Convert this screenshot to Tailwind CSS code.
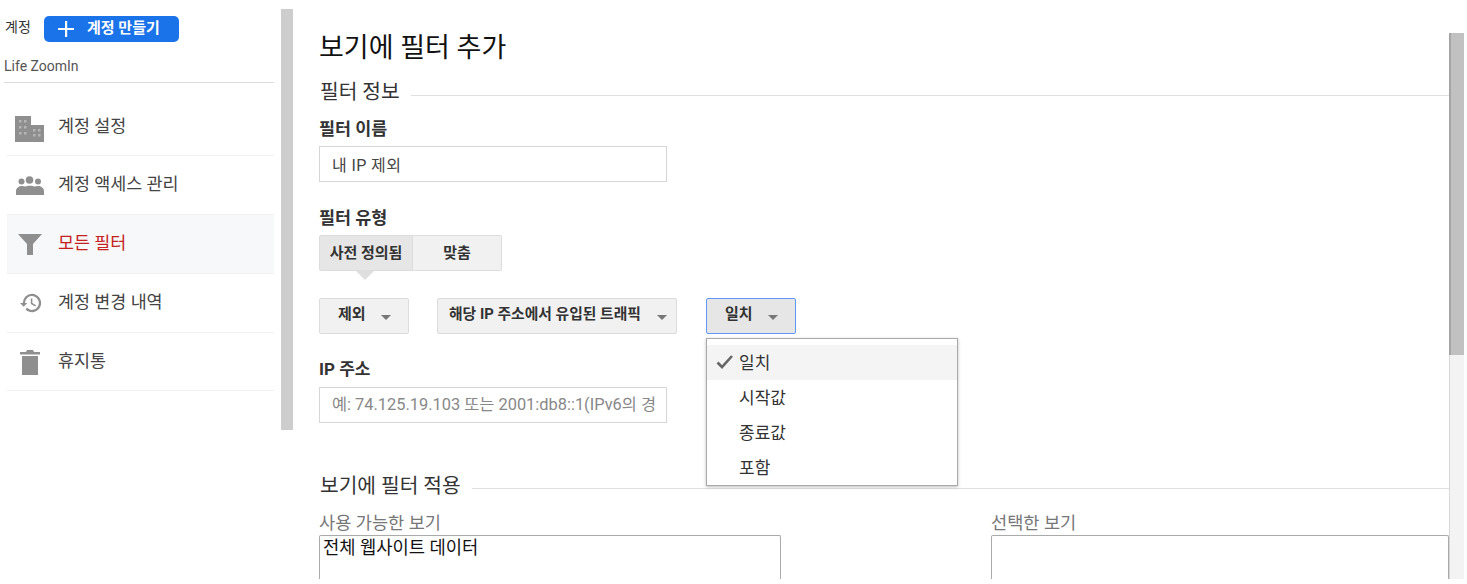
<!DOCTYPE html>
<html lang="ko">
<head>
<meta charset="utf-8">
<script src="https://cdn.jsdelivr.net/npm/@tailwindcss/browser@4"></script>
</head>
<body class="h-[584px] w-[1467px] overflow-hidden bg-white font-['Roboto','Noto_Sans_CJK_KR',sans-serif] text-[#333]">
<div class="flex h-[584px] w-full">
  <aside class="flex w-[293px] shrink-0 items-start">
    <div class="w-[281px] pl-[4px]">
      <div class="flex h-[56px] items-start pt-[16px]">
        <span class="mt-[2px] w-[40px] pl-px text-[14px] leading-[18px] text-[#333]">계정</span>
        <button class="flex h-[26px] w-[135px] items-center rounded-[5px] bg-[#1a73e8] pl-[13px] text-[15px] font-bold text-white">
          <svg class="h-[18px] w-[18px]" viewBox="0 0 18 18"><path d="M8 1h2.200v6.900H17v2.200h-6.800V17H8v-6.900H1V7.900h7z" fill="#fff"/></svg>
          <span class="ml-[12px] -mt-[2px] leading-[18px]">계정 만들기</span>
        </button>
      </div>
      <div class="mr-[7px] h-[27px] border-b border-[#ddd] text-[14px] leading-[20px] text-[#555]">Life ZoomIn</div>
      <nav class="ml-[3px] mr-[7px] mt-[14px] text-[17.400px] leading-[20px] text-[#444]">
        <div class="flex h-[59px] items-center border-b border-[#f1f1f1]">
          <svg class="ml-[8px] mt-[5px] h-[26px] w-[29px]" viewBox="0 0 29 26" fill="#8f8f8f"><path d="M0 0h16v9h13v17H0z"/><path fill="#b5b5b5" d="M4 4h2.500v2.500H4zm5 0h2.500v2.500H9zM4 10h2.500v2.500H4zm5 0h2.500v2.500H9zM4 16h2.500v2.500H4zm5 0h2.500v2.500H9zm9-3h2.500v2.500H18zm5 0h2.500v2.500H23zm-5 5h2.500v2.500H18zm5 0h2.500v2.500H23z"/></svg>
          <span class="ml-[14px] -mt-[1px]">계정 설정</span>
        </div>
        <div class="flex h-[59px] items-center border-b border-[#f1f1f1]">
          <svg class="ml-[9px] h-[19px] w-[28px]" viewBox="0 0 28 19" fill="#8f8f8f"><circle cx="13.500" cy="4" r="3.800"/><circle cx="5.500" cy="5.500" r="3"/><circle cx="22" cy="5.500" r="3"/><path d="M0 19v-4c0-3 3-5 6-5 1.500 0 2.500.2 3.500.6 1.200-.6 2.600-.8 4.500-.8s3.300.2 4.500.8c1-.4 2-.6 3.500-.6 3 0 6 2 6 5v4z"/></svg>
          <span class="ml-[14px] -mt-[2px]">계정 액세스 관리</span>
        </div>
        <div class="flex h-[59px] items-center border-b border-[#f1f1f1] bg-[#f7f8f9]">
          <svg class="ml-[11px] h-[21px] w-[24px]" viewBox="0 0 24 21" fill="#8f8f8f"><path d="M0 0h24l-9 10v11H9V10z"/></svg>
          <span class="ml-[16px] -mt-[2px] text-[#c5221f]">모든 필터</span>
        </div>
        <div class="flex h-[59px] items-center border-b border-[#f1f1f1]">
          <svg class="ml-[13px] h-[22px] w-[22px]" viewBox="0 0 24 24" fill="#8f8f8f"><path d="M13 2a10 10 0 0 0-10 10H0l4 4 4-4H5.500a7.500 7.500 0 1 1 2.200 5.300l-1.700 1.800A10 10 0 1 0 13 2zm-1.200 5v6l4.800 2.900.9-1.500-4-2.400V7z"/></svg>
          <span class="ml-[16px] -mt-[2px]">계정 변경 내역</span>
        </div>
        <div class="flex h-[58px] items-center border-b border-[#f1f1f1]">
          <svg class="ml-[13px] h-[26px] w-[20px]" viewBox="0 0 20 26" fill="#8f8f8f"><path d="M0 3h6l1-2h6l1 2h6v2.500H0zM2 7h16v19H2z"/></svg>
          <span class="ml-[18px] -mt-[2px]">휴지통</span>
        </div>
      </nav>
    </div>
    <div class="mt-[9px] h-[421px] w-[12px] bg-[#cdcdcd]"></div>
  </aside>

  <main class="relative w-[1156px] shrink-0 pl-[26px]">
    <h1 class="mt-[31px] text-[27px] leading-[34px] text-[#111]">보기에 필터 추가</h1>

    <div class="mt-[15px] flex h-[26px] items-start">
      <h2 class="pl-px text-[20.300px] leading-[24px] text-[#333]">필터 정보</h2>
      <div class="ml-[11px] mt-[15px] h-px flex-1 bg-[#e0e0e0]"></div>
    </div>

    <div class="mt-[12px] text-[17.400px] font-bold leading-[22px] text-[#333]">필터 이름</div>
    <div class="mt-[6px] flex h-[36px] w-[348px] items-center border border-[#d6d6d6] pl-[12px] pt-[3px] text-[16px] tracking-[0.400px] text-[#444]">내 IP 제외</div>

    <div class="mt-[25px] text-[17.400px] font-bold leading-[22px] text-[#333]">필터 유형</div>
    <div class="relative mt-[6px] flex h-[36px] w-[183px] text-[15px] font-bold text-[#333]">
      <div class="flex w-[94px] items-center justify-center rounded-l-[2px] border border-[#dcdcdc] bg-[#e6e6e6]">사전 정의됨</div>
      <div class="flex flex-1 items-center justify-center rounded-r-[2px] border border-l-0 border-[#dcdcdc] bg-[#f1f1f1]">맞춤</div>
      <div class="absolute left-[37px] top-[36px] h-0 w-0 border-x-[9px] border-t-[9px] border-x-transparent border-t-[#dfdfdf]"></div>
    </div>

    <div class="mt-[27px] flex h-[36px] items-start text-[15px] font-bold text-[#333]">
      <div class="flex h-[36px] w-[90px] items-center rounded-[2px] border border-[#dcdcdc] bg-[#f1f1f1] pb-[3px] pl-[18px]">
        제외<span class="ml-[15px] mt-[5px] h-0 w-0 border-x-[5px] border-t-[5px] border-x-transparent border-t-[#777]"></span>
      </div>
      <div class="ml-[28px] flex h-[36px] w-[240px] items-center rounded-[2px] border border-[#dcdcdc] bg-[#f1f1f1] pb-[3px] pl-[11px] text-[14.800px]">
        해당 IP 주소에서 유입된 트래픽<span class="ml-[16px] mt-[5px] h-0 w-0 border-x-[5px] border-t-[5px] border-x-transparent border-t-[#777]"></span>
      </div>
      <div class="ml-[29px] flex h-[36px] w-[90px] items-center rounded-[2px] border border-[#5e97f6] bg-[#e6e6e6] pb-[3px] pl-[18px]">
        일치<span class="ml-[15px] mt-[5px] h-0 w-0 border-x-[5px] border-t-[5px] border-x-transparent border-t-[#777]"></span>
      </div>
    </div>

    <div class="mt-[24px] text-[17px] font-bold leading-[22px] text-[#333]">IP 주소</div>
    <div class="mt-[7px] flex h-[36px] w-[348px] items-center overflow-hidden whitespace-nowrap border border-[#d6d6d6] pl-[12px] text-[16.400px] text-[#888]">예: 74.125.19.103 또는 2001:db8::1(IPv6의 경</div>

    <div class="mt-[51px] flex h-[25px] items-start">
      <h2 class="pl-px text-[20.300px] leading-[24px] text-[#333]">보기에 필터 적용</h2>
      <div class="ml-[11px] mt-[14px] h-px flex-1 bg-[#e0e0e0]"></div>
    </div>

    <div class="mt-[15px] flex">
      <div class="w-[462px]">
        <div class="mb-[3px] text-[17.600px] leading-[18px] text-[#777]">사용 가능한 보기</div>
        <div class="h-[44px] rounded-t-[2px] border border-b-0 border-[#aaa] px-[3px] text-[17.700px] leading-[24px] text-[#111]">전체 웹사이트 데이터</div>
      </div>
      <div class="ml-[210px] w-[458px]">
        <div class="mb-[3px] text-[17.600px] leading-[18px] text-[#777]">선택한 보기</div>
        <div class="h-[44px] rounded-t-[2px] border border-b-0 border-[#aaa]"></div>
      </div>
    </div>

    <div class="absolute left-[413px] top-[338px] w-[252px] border border-[#aaa] bg-white pt-[6px] text-[17px] text-[#333] shadow-[0_1px_3px_rgba(0,0,0,0.25)]">
      <div class="relative flex h-[35px] items-center bg-[#f4f4f4] pl-[32px] pt-[2px]">
        <svg class="absolute left-[9px] top-[9px] h-[16px] w-[18px]" viewBox="0 0 18 16" fill="none" stroke="#666" stroke-width="2.600"><path d="M1.500 8.500 6 13 16 2"/></svg>
        일치
      </div>
      <div class="flex h-[35px] items-center pl-[32px] pt-[2px]">시작값</div>
      <div class="flex h-[35px] items-center pl-[32px] pt-[2px]">종료값</div>
      <div class="flex h-[35px] items-center pl-[32px] pt-[2px]">포함</div>
    </div>
  </main>
  <div class="mt-[33px] flex h-[546px] w-[15px] shrink-0 flex-col border-l border-[#d8d8d8] bg-[#f3f3f3]">
    <div class="-ml-px h-[322px] w-[15px] border-l-2 border-[#a5a5a5] bg-[#c1c1c1]"></div>
  </div>
</div>
</body>
</html>
